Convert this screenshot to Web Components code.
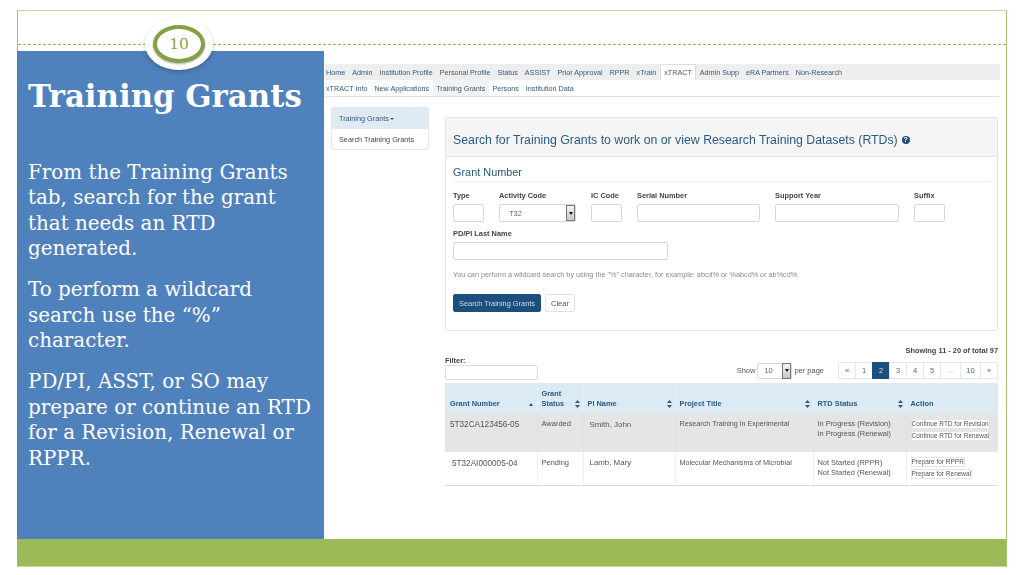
<!DOCTYPE html>
<html>
<head>
<meta charset="utf-8">
<title>Training Grants</title>
<style>
  html, body { margin: 0; padding: 0; background: #fff; }
  body { width: 1024px; height: 575px; overflow: hidden; font-family: "Liberation Sans", Arial, sans-serif; }
</style>
</head>
<body>
<slide-frame>
  <slide-badge slot="top">10</slide-badge>
  <slide-panel slot="side" heading="Training Grants">
    <p>From the Training Grants tab, search for the grant that needs an RTD generated.</p>
    <p>To perform a wildcard search use the “%” character.</p>
    <p>PD/PI, ASST, or SO may prepare or continue an RTD for a Revision, Renewal or RPPR.</p>
  </slide-panel>
  <app-shot slot="main"></app-shot>
</slide-frame>

<script>
class SlideFrame extends HTMLElement {
  constructor() {
    super();
    this.attachShadow({ mode: "open" });
    this.shadowRoot.innerHTML = `
      <style>
        :host { display: block; padding: 10px 17px 0; }
        .frame {
          box-sizing: border-box;
          width: 990px;
          height: 557px;
          border: 1px solid #c9d3a8;
          border-left-color: #a9bf72;
          border-right-color: #a9bf72;
          display: flex;
          flex-direction: column;
        }
        .top { height: 40px; position: relative; }
        .top::after {
          content: "";
          position: absolute;
          left: 0;
          right: 0;
          top: 33px;
          border-top: 1px dashed #9bb05f;
        }
        .mid { flex: 1; display: flex; min-height: 0; }
        .foot { height: 27px; background: #9bbb59; margin-left: -1px; }
      </style>
      <div class="frame">
        <div class="top"><slot name="top"></slot></div>
        <div class="mid">
          <slot name="side"></slot>
          <slot name="main"></slot>
        </div>
        <div class="foot"></div>
      </div>
    `;
  }
}

class SlideBadge extends HTMLElement {
  constructor() {
    super();
    this.attachShadow({ mode: "open" });
    this.shadowRoot.innerHTML = `
      <style>
        :host {
          position: absolute;
          z-index: 2;
          left: 127px;
          top: 7px;
          width: 68px;
          height: 52px;
          border-radius: 50%;
          background: #fff;
          box-shadow: 0 2px 4px rgba(0, 0, 0, 0.22);
          display: flex;
          align-items: center;
          justify-content: center;
        }
        .ring {
          box-sizing: border-box;
          width: 52px;
          height: 38px;
          border: 4px solid #86a044;
          border-radius: 50%;
          background: #fff;
          box-shadow: 0 1px 2px rgba(0, 0, 0, 0.35);
          display: flex;
          align-items: center;
          justify-content: center;
          color: #8aa548;
          font: 15.5px "DejaVu Serif", serif;
          margin-top: -1px;
        }
      </style>
      <div class="ring"><slot></slot></div>
    `;
  }
}

class SlidePanel extends HTMLElement {
  constructor() {
    super();
    this.attachShadow({ mode: "open" });
    this.shadowRoot.innerHTML = `
      <style>
        :host {
          display: block;
          box-sizing: border-box;
          width: 307px;
          margin-left: -1px;
          flex: none;
          background: #4f81bd;
          color: #fff;
          padding: 24px 11px 0;
          font-family: "DejaVu Serif", serif;
        }
        h1 { margin: 0 0 42.5px; font-size: 30.8px; line-height: 42px; font-weight: bold; white-space: nowrap; }
        ::slotted(p) {
          margin: 0 0 15.2px;
          font-size: 19.9px;
          line-height: 25.6px;
        }
      </style>
      <h1></h1>
      <slot></slot>
    `;
    this.shadowRoot.querySelector("h1").textContent = this.getAttribute("heading");
  }
}

class NavBar extends HTMLElement {
  constructor() {
    super();
    this.attachShadow({ mode: "open" });
    const items = (this.getAttribute("items") || "").split("|");
    const active = this.getAttribute("active");
    this.shadowRoot.innerHTML = `
      <style>
        :host { display: flex; height: 16px; font-size: 7.2px; color: #34597c; }
        a { display: flex; align-items: center; padding: 0 3.5px; white-space: nowrap; }
        a:first-of-type { padding-left: 1px; }
        a.on { background: var(--on-bg, #fff); color: #555; border: var(--on-border, 1px solid #ddd); border-bottom: 0; box-sizing: border-box; }
      </style>
      ${items.map(t => `<a class="${t === active ? "on" : ""}">${t}</a>`).join("")}
    `;
  }
}

class SideMenu extends HTMLElement {
  constructor() {
    super();
    this.attachShadow({ mode: "open" });
    this.shadowRoot.innerHTML = `
      <style>
        :host {
          display: block;
          box-sizing: border-box;
          width: 98px;
          height: 43px;
          margin: 10px 0 0 6px;
          border: 1px solid #e4e8ec;
          border-radius: 2px;
          font-size: 7.3px;
          flex: none;
        }
        div { height: 21px; display: flex; align-items: center; padding-left: 7px; color: #444; }
        .head { background: #dfeaf3; color: #34597c; }
        i { border: 2px solid transparent; border-top-color: #34597c; border-bottom: 0; margin-left: 1px; }
      </style>
      <div class="head">Training Grants<i></i></div>
      <div>Search Training Grants</div>
    `;
  }
}

class FormField extends HTMLElement {
  constructor() {
    super();
    this.attachShadow({ mode: "open" });
    this.shadowRoot.innerHTML = `
      <style>
        :host { display: block; flex: none; }
        label { display: block; height: 13px; font-size: 7.4px; font-weight: bold; color: #444; line-height: 10px; white-space: nowrap; }
        .box {
          box-sizing: border-box;
          height: 18px;
          border: 1px solid #d8d8d8;
          border-radius: 2px;
          background: #fff;
        }
      </style>
      <label></label>
      <slot><div class="box"></div></slot>
    `;
    this.shadowRoot.querySelector("label").textContent = this.getAttribute("label");
    if (this.hasAttribute("width")) this.style.width = this.getAttribute("width") + "px";
  }
}

class SelectBox extends HTMLElement {
  constructor() {
    super();
    this.attachShadow({ mode: "open" });
    this.shadowRoot.innerHTML = `
      <style>
        :host {
          display: flex;
          box-sizing: border-box;
          height: 18px;
          border: 1px solid #d8d8d8;
          border-radius: 2px;
          background: #fff;
          color: #666;
          font-size: 7.5px;
          align-items: center;
          justify-content: space-between;
          padding-left: 9px;
        }
        b {
          box-sizing: border-box;
          width: 9px;
          height: 16px;
          border: 1px solid #777;
          background: linear-gradient(#f4f4f4, #c8c8c8);
          display: flex;
          align-items: center;
          justify-content: center;
        }
        i { border: 2px solid transparent; border-top: 3px solid #111; border-bottom: 0; }
      </style>
      <span><slot></slot></span>
      <b><i></i></b>
    `;
  }
}

class SearchPanel extends HTMLElement {
  constructor() {
    super();
    this.attachShadow({ mode: "open" });
    this.shadowRoot.innerHTML = `
      <style>
        :host { display: block; box-sizing: border-box; height: 214px; border: 1px solid #e4e4e4; border-radius: 2px; }
        header {
          height: 39px;
          background: #f5f5f5;
          border-bottom: 1px solid #e4e4e4;
          display: flex;
          align-items: center;
          padding: 5px 0 0 7px;
          box-sizing: border-box;
          color: #2b5a86;
          font-size: 12.3px;
          white-space: nowrap;
        }
        .help {
          display: inline-flex;
          align-items: center;
          justify-content: center;
          width: 8px;
          height: 8px;
          margin-left: 4px;
          border-radius: 50%;
          background: #1f4e79;
          color: #fff;
          font-size: 7px;
          font-weight: bold;
        }
        .body { padding: 9px 7px 0; }
        h3 {
          margin: 0 0 9px;
          height: 15px;
          line-height: 13px;
          font-weight: normal;
          font-size: 10.9px;
          color: #2b5a86;
          border-bottom: 1px solid #eee;
        }
        .row { display: flex; gap: 15px; margin-bottom: 7px; }
        .hint { font-size: 7.25px; color: #8a8a8a; margin: 10px 0 14px; line-height: 10px; white-space: nowrap; }
        .btns { display: flex; gap: 4px; }
        button {
          box-sizing: border-box;
          height: 18px;
          border: 1px solid #e2e2e2;
          border-radius: 2px;
          background: #fff;
          color: #555;
          font: 7.5px "Liberation Sans", sans-serif;
          padding: 0;
          width: 30px;
        }
        button.go { width: 88px; background: #1c4e7e; border-color: #1c4e7e; color: #cfdde9; font-size: 7.4px; }
      </style>
      <header>Search for Training Grants to work on or view Research Training Datasets (RTDs)<span class="help">?</span></header>
      <div class="body">
        <h3>Grant Number</h3>
        <div class="row">
          <form-field label="Type" width="31"></form-field>
          <form-field label="Activity Code" width="77"><select-box>T32</select-box></form-field>
          <form-field label="IC Code" width="31"></form-field>
          <form-field label="Serial Number" width="123"></form-field>
          <form-field label="Support Year" width="124"></form-field>
          <form-field label="Suffix" width="31"></form-field>
        </div>
        <form-field label="PD/PI Last Name" width="215"></form-field>
        <p class="hint">You can perform a wildcard search by using the "%" character, for example: abcd% or %abcd% or ab%cd%</p>
        <div class="btns"><button class="go">Search Training Grants</button><button>Clear</button></div>
      </div>
    `;
  }
}

class PageList extends HTMLElement {
  constructor() {
    super();
    this.attachShadow({ mode: "open" });
    const pages = [["«", 17], ["1", 17], ["2", 17], ["3", 17], ["4", 17], ["5", 17], ["...", 20], ["10", 20], ["»", 17]];
    this.shadowRoot.innerHTML = `
      <style>
        :host { display: flex; height: 17px; font-size: 7.5px; color: #4a6b8a; }
        a { box-sizing: border-box; display: flex; align-items: center; justify-content: center; border: 1px solid #e6e6e6; margin-left: -1px; background: #fff; }
        a.on { background: #1c4e7e; border-color: #1c4e7e; color: #d5e1ec; }
        a.off { color: #bbb; }
      </style>
      ${pages.map(([t, w]) => `<a style="width:${w + 1}px" class="${t === "2" ? "on" : t === "..." ? "off" : ""}">${t}</a>`).join("")}
    `;
  }
}

const SORT_ICON = `<svg width="5" height="8" viewBox="0 0 5 8"><path d="M2.5 0 5 3H0zM2.5 8 0 5h5z" fill="#34597c"/></svg>`;

class ResultsTable extends HTMLElement {
  constructor() {
    super();
    this.attachShadow({ mode: "open" });
    this.shadowRoot.innerHTML = `
      <style>
        :host { display: block; }
        table { border-collapse: collapse; table-layout: fixed; width: 553px; font-size: 7.2px; color: #555; }
        th {
          height: 30px;
          padding: 0 3px 4px 4px;
          box-sizing: border-box;
          background: #dceaf3;
          color: #2b5a86;
          font-size: 7.4px;
          text-align: left;
          vertical-align: bottom;
          border-left: 1px solid #e8f0f6;
          line-height: 10px;
        }
        th:first-child { padding-left: 5px; }
        th:first-child, td:first-child { border-left: 0; }
        th div { display: flex; justify-content: space-between; align-items: flex-end; }
        svg { margin-bottom: 1px; flex: none; }
        .up { border: 2.5px solid transparent; border-bottom: 3px solid #34597c; border-top: 0; margin-bottom: 3px; margin-right: 1px; }
        td { box-sizing: border-box; vertical-align: top; padding: 6px 4px 0; border-left: 1px solid #eee; line-height: 10px; }
        tr.a td { height: 39px; background: #e5e5e5; border-left-color: #e0e0e0; }
        tr.b td { height: 33px; border-bottom: 1px solid #ddd; }
        .st { font-size: 7.5px; }
        .rtd { font-size: 7.4px; }
        td.num { font-size: 8.2px; padding: 7px 5px 0; }
        td.name { font-size: 7.9px; padding-left: 6px; }
        tr.a td.name { padding-top: 7px; }
        td.act { padding: 6px 0 0 4px; }
        tr.b td.act { padding-top: 5px; }
        .act span {
          display: table;
          box-sizing: border-box;
          height: 10px;
          line-height: 8px;
          margin-bottom: 2px;
          padding: 0 3px;
          background: #fff;
          border: 1px solid #e4e4e4;
          font-size: 6.5px;
          color: #555;
          white-space: nowrap;
        }
      </style>
      <table>
        <colgroup><col style="width:92px"><col style="width:46px"><col style="width:92px"><col style="width:138px"><col style="width:93px"><col style="width:92px"></colgroup>
        <thead><tr>
          <th><div>Grant Number<i class="up"></i></div></th>
          <th><div>Grant<br>Status ${SORT_ICON}</div></th>
          <th><div>PI Name ${SORT_ICON}</div></th>
          <th><div>Project Title ${SORT_ICON}</div></th>
          <th><div>RTD Status ${SORT_ICON}</div></th>
          <th>Action</th>
        </tr></thead>
        <tbody>
          <tr class="a">
            <td class="num">5T32CA123456-05</td>
            <td class="st">Awarded</td>
            <td class="name">Smith, John</td>
            <td>Research Training in Experimental</td>
            <td class="rtd">In Progress (Revision)<br>In Progress (Renewal)</td>
            <td class="act"><span>Continue RTD for Revision</span><span>Continue RTD for Renewal</span></td>
          </tr>
          <tr class="b">
            <td class="num" style="padding-left:7px">5T32AI000005-04</td>
            <td class="st">Pending</td>
            <td class="name">Lamb, Mary</td>
            <td>Molecular Mechanisms of Microbial</td>
            <td class="rtd">Not Started (RPPR)<br>Not Started (Renewal)</td>
            <td class="act"><span>Prepare for RPPR</span><span>Prepare for Renewal</span></td>
          </tr>
        </tbody>
      </table>
    `;
  }
}

class AppShot extends HTMLElement {
  constructor() {
    super();
    this.attachShadow({ mode: "open" });
    this.shadowRoot.innerHTML = `
      <style>
        :host {
          display: block;
          flex: 1;
          padding: 13px 6px 0 1px;
          color: #444;
          font-family: "Liberation Sans", Arial, sans-serif;
          filter: blur(0.4px);
        }
        nav-bar.one { background: #eee; }
        nav-bar.two { border-bottom: 1px solid #e2e2e2; box-sizing: border-box; height: 17px; --on-bg: #eef3f6; --on-border: 0; }
        .work { display: flex; }
        .main { width: 553px; margin: 20px 0 0 16px; }
        .showing { text-align: right; font-size: 7.4px; font-weight: bold; color: #444; margin-top: 15px; line-height: 10px; }
        .tools { display: flex; justify-content: space-between; align-items: flex-end; margin-bottom: 3px; margin-top: -1px; height: 25px; }
        .filter label { display: block; font-size: 7.4px; font-weight: bold; height: 10px; line-height: 12px; margin-top: -2px; }
        .filter div { box-sizing: border-box; width: 93px; height: 15px; border: 1px solid #ddd; border-radius: 2px; }
        .right { display: flex; align-items: center; gap: 2px; font-size: 7.5px; color: #555; margin-bottom: 1px; }
        select-box { width: 35px; height: 16px; padding-left: 6px; }
        page-list { margin-left: 13px; }
      </style>
      <nav-bar class="one" active="xTRACT" items="Home|Admin|Institution Profile|Personal Profile|Status|ASSIST|Prior Approval|RPPR|xTrain|xTRACT|Admin Supp|eRA Partners|Non-Research"></nav-bar>
      <nav-bar class="two" active="Training Grants" items="xTRACT Info|New Applications|Training Grants|Persons|Institution Data"></nav-bar>
      <div class="work">
        <side-menu></side-menu>
        <div class="main">
          <search-panel></search-panel>
          <div class="showing">Showing 11 - 20 of total 97</div>
          <div class="tools">
            <div class="filter"><label>Filter:</label><div></div></div>
            <div class="right">Show <select-box>10</select-box> per page <page-list></page-list></div>
          </div>
          <results-table></results-table>
        </div>
      </div>
    `;
  }
}

customElements.define("slide-frame", SlideFrame);
customElements.define("slide-badge", SlideBadge);
customElements.define("slide-panel", SlidePanel);
customElements.define("nav-bar", NavBar);
customElements.define("side-menu", SideMenu);
customElements.define("form-field", FormField);
customElements.define("select-box", SelectBox);
customElements.define("search-panel", SearchPanel);
customElements.define("page-list", PageList);
customElements.define("results-table", ResultsTable);
customElements.define("app-shot", AppShot);
</script>
</body>
</html>
